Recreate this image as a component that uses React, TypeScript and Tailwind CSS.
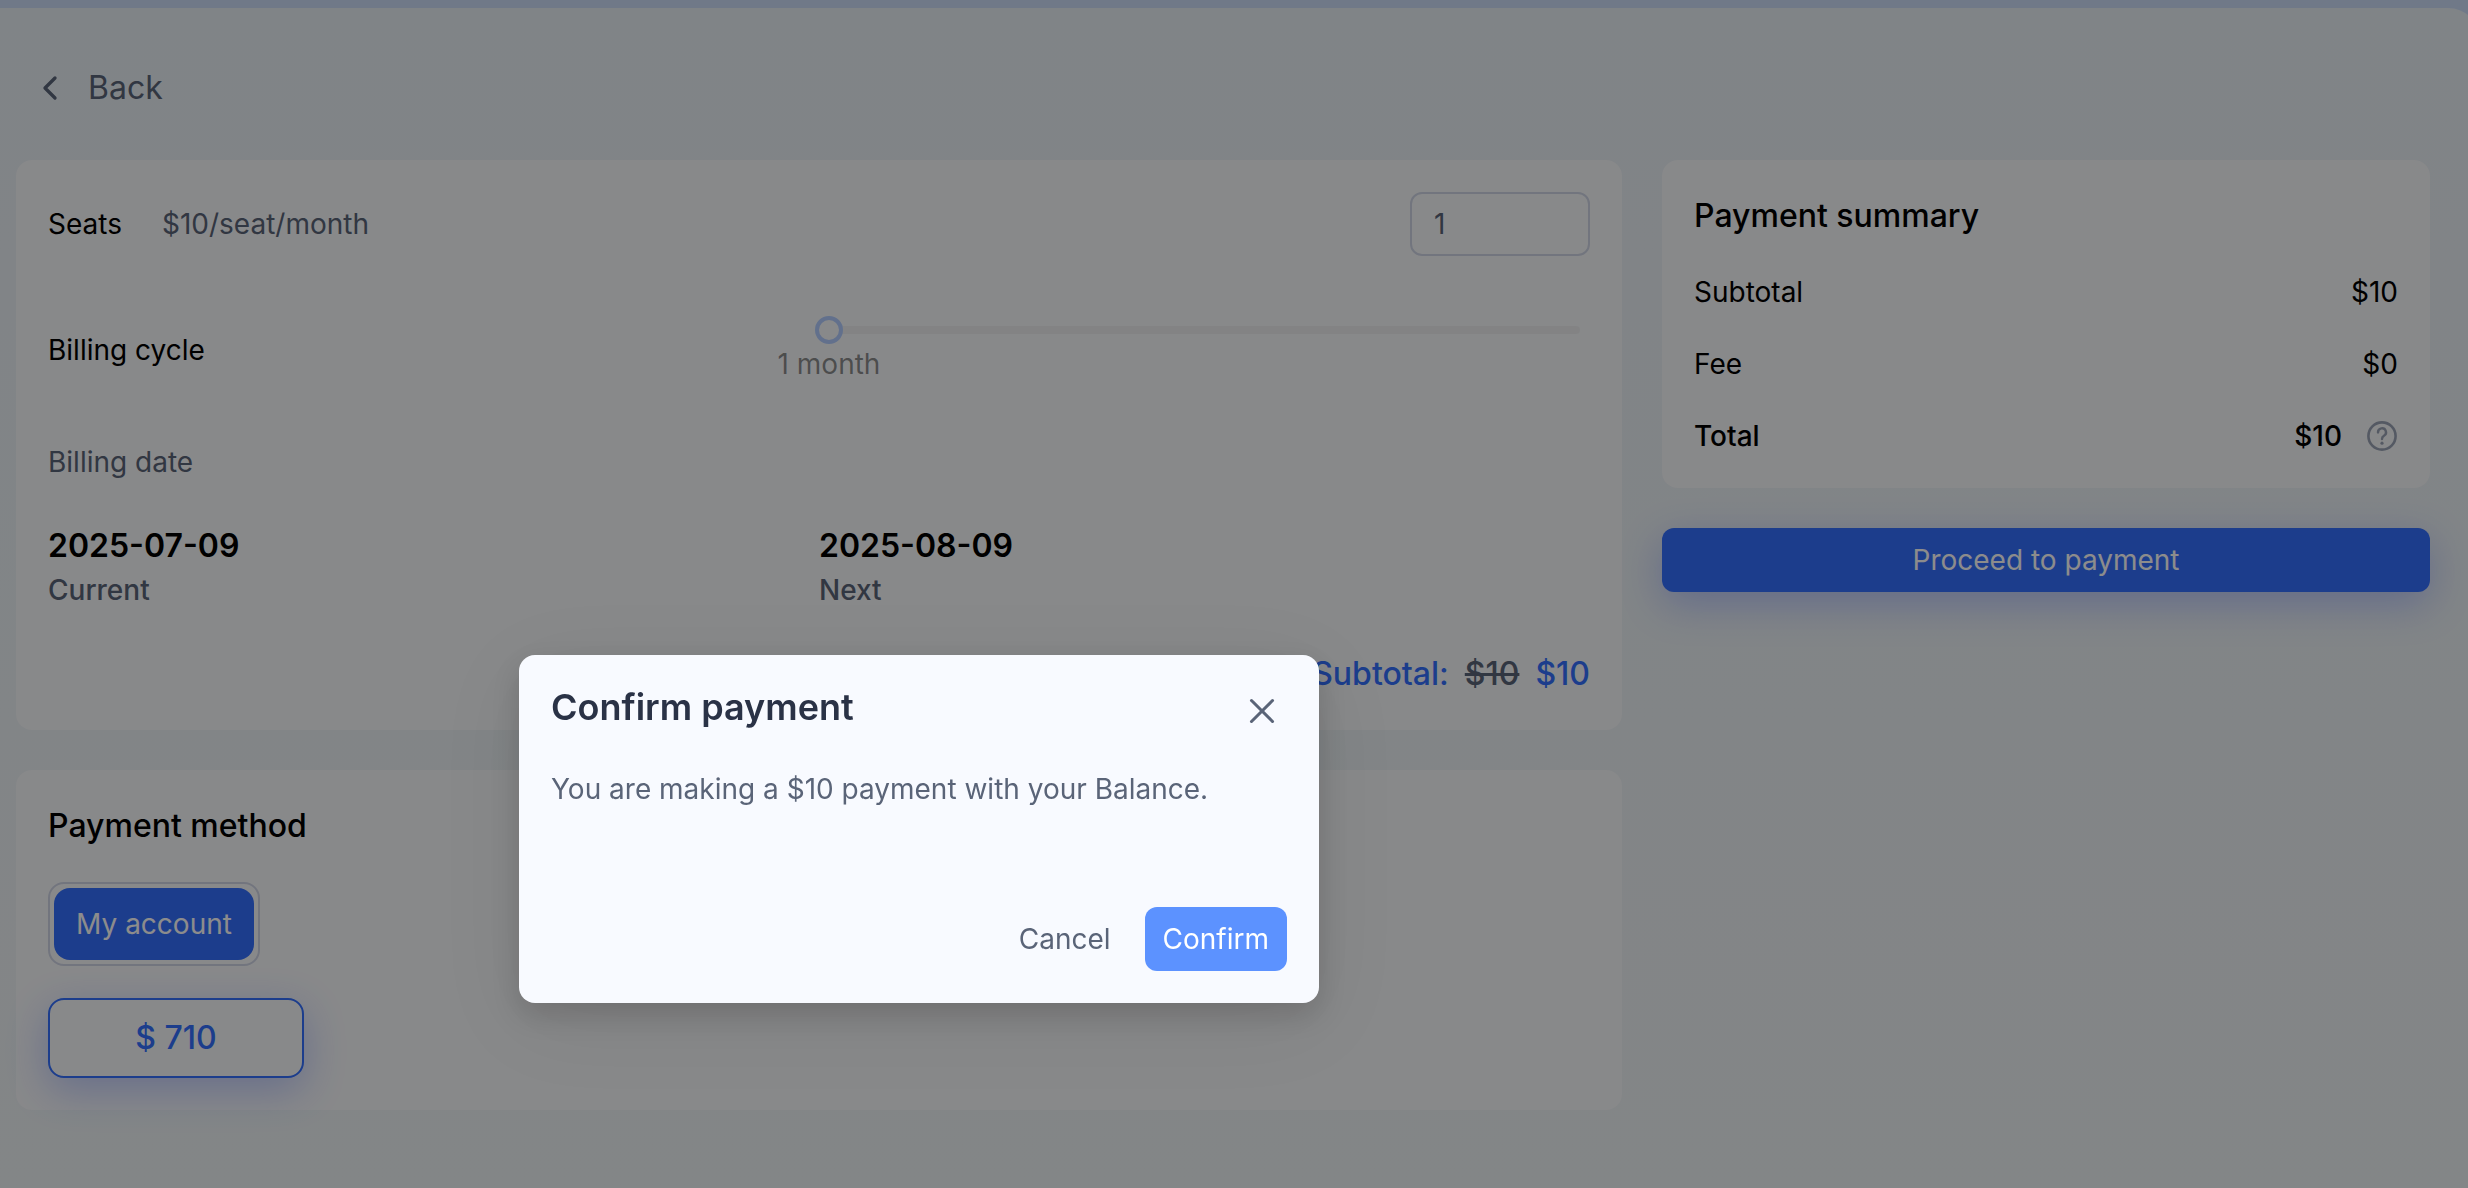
import { useState } from "react";
import { ChevronLeft, X } from "lucide-react";

const PRICE_PER_SEAT = 10;

function HelpIcon() {
  return (
    <svg width="32" height="32" viewBox="0 0 32 32" fill="none" aria-hidden="true">
      <circle cx="16" cy="16" r="13.6" stroke="currentColor" strokeWidth="2.6" />
      <path
        d="M12 12.4a4 4 0 1 1 6 3.4c-1.3.8-2 1.6-2 3.2"
        stroke="currentColor"
        strokeWidth="2.4"
        strokeLinecap="round"
      />
      <circle cx="16" cy="23.2" r="1.6" fill="currentColor" />
    </svg>
  );
}

interface BillingDateProps {
  date: string;
  label: string;
}

function BillingDate({ date, label }: BillingDateProps) {
  return (
    <div className="font-medium">
      <p className="text-[32px] font-semibold leading-[44px] text-black">{date}</p>
      <p className="text-[#5a6478]">{label}</p>
    </div>
  );
}

interface SummaryRowProps {
  label: string;
  value: string;
}

function SummaryRow({ label, value }: SummaryRowProps) {
  return (
    <div className="flex justify-between leading-[40px]">
      <span>{label}</span>
      <span>{value}</span>
    </div>
  );
}

function PlanCard() {
  const [seats, setSeats] = useState(1);
  const [months, setMonths] = useState(1);

  return (
    <section className="rounded-2xl bg-[#f8f9fb] p-8">
      <div className="flex items-center gap-10">
        <label htmlFor="seats">Seats</label>
        <span className="text-[#5a6478]">${PRICE_PER_SEAT}/seat/month</span>
        <input
          id="seats"
          type="text"
          inputMode="numeric"
          value={seats}
          onChange={(e) => setSeats(Number(e.target.value) || 1)}
          className="ml-auto h-16 w-[180px] rounded-xl border-2 border-[#cfd6e6] bg-transparent px-[22px] text-[#5a6478]"
        />
      </div>

      <div className="mt-[60px] grid grid-cols-2 items-center">
        <label htmlFor="cycle">Billing cycle</label>
        <div>
          <div className="relative h-7">
            <div className="absolute inset-x-[10px] top-[10px] h-2 rounded-full bg-black/4" />
            <input
              id="cycle"
              type="range"
              min={1}
              max={12}
              value={months}
              onChange={(e) => setMonths(Number(e.target.value))}
              className="absolute -inset-x-1 top-0 h-7 appearance-none bg-transparent [&::-webkit-slider-thumb]:size-7 [&::-webkit-slider-thumb]:appearance-none [&::-webkit-slider-thumb]:rounded-full [&::-webkit-slider-thumb]:border-4 [&::-webkit-slider-thumb]:border-[#b2cdff] [&::-webkit-slider-thumb]:bg-[#f8f9fb]"
            />
          </div>
          <p className="-ml-[70px] w-40 text-center leading-[40px] text-black/45">{months} month</p>
        </div>
      </div>

      <p className="mt-14 text-[#5a6478]">Billing date</p>
      <div className="mt-10 grid grid-cols-2">
        <BillingDate date="2025-07-09" label="Current" />
        <BillingDate date="2025-08-09" label="Next" />
      </div>

      <div className="mt-[38px] flex justify-end gap-4 text-[32px] font-medium leading-[48px] text-[#3370ff]">
        <span>Subtotal:</span>
        <del className="text-[#5a6478]">$10</del>
        <span>$10</span>
      </div>
    </section>
  );
}

function PaymentMethodCard() {
  return (
    <section className="rounded-2xl bg-[#f8f9fb] p-8">
      <h2 className="text-[32px] font-medium leading-[48px]">Payment method</h2>
      <div className="mt-8 w-fit rounded-2xl border-2 border-[#d0d5e6] p-1">
        <button type="button" className="block h-[72px] w-[200px] rounded-2xl bg-[#3370ff] text-white">
          My account
        </button>
      </div>
      <button
        type="button"
        className="mt-8 block h-20 w-64 rounded-2xl border-2 border-[#3370ff] bg-[#f8f9fb] text-[32px] font-medium text-[#3370ff] shadow-[0_12px_40px_rgba(51,88,255,0.3)]"
      >
        $ 710
      </button>
    </section>
  );
}

function PaymentSummary() {
  return (
    <aside className="w-[768px] shrink-0">
      <section className="flex flex-col gap-8 rounded-2xl bg-[#f8f9fb] p-8">
        <h2 className="text-[32px] font-medium leading-[48px]">Payment summary</h2>
        <SummaryRow label="Subtotal" value="$10" />
        <SummaryRow label="Fee" value="$0" />
        <div className="flex items-center font-medium leading-[40px]">
          <span>Total</span>
          <span className="ml-auto">$10</span>
          <button type="button" aria-label="About the total" className="ml-6 text-[#9aa3b5]">
            <HelpIcon />
          </button>
        </div>
      </section>
      <button
        type="button"
        className="mt-10 h-16 w-full rounded-xl bg-[#3370ff] text-white shadow-[0_12px_40px_rgba(51,88,255,0.3)]"
      >
        Proceed to payment
      </button>
    </aside>
  );
}

function ConfirmDialog() {
  return (
    <div className="fixed inset-0 flex items-start justify-center bg-black/45 pr-[630px] pt-[655px]">
      <div
        role="dialog"
        aria-modal="true"
        aria-labelledby="confirm-title"
        className="w-[800px] rounded-2xl bg-[#f8faff] p-8 text-[#5a6478] shadow-[0_12px_32px_rgba(0,0,0,0.16),0_18px_96px_16px_rgba(0,0,0,0.06)]"
      >
        <div className="flex h-10 items-center justify-between">
          <h2 id="confirm-title" className="text-4xl font-semibold text-[#2a3246]">
            Confirm payment
          </h2>
          <button type="button" aria-label="Close" className="mr-1 mt-2">
            <X size={42} strokeWidth={1.75} />
          </button>
        </div>
        <p className="mt-10">You are making a $10 payment with your Balance.</p>
        <div className="mt-24 flex justify-end gap-4">
          <button type="button" className="h-16 px-[18px]">
            Cancel
          </button>
          <button type="button" className="h-16 rounded-xl bg-[#5c92ff] px-[18px] text-white">
            Confirm
          </button>
        </div>
      </div>
    </div>
  );
}

export default function App() {
  return (
    <div className="h-screen overflow-hidden bg-[#ccddf8] pt-2 font-['Inter',sans-serif] text-[28px] leading-[44px] text-black">
      <main className="-mr-3 min-h-full rounded-tr-[32px] bg-linear-to-b from-[#eaf0f6] to-[#eff4f6] pl-4 pr-[50px] pt-2">
        <button type="button" className="ml-3.5 flex h-36 items-center gap-[18px] text-[32px] text-[#5a6478]">
          <ChevronLeft size={40} />
          Back
        </button>
        <div className="flex items-start gap-10">
          <div className="flex min-w-0 flex-1 flex-col gap-10">
            <PlanCard />
            <PaymentMethodCard />
          </div>
          <PaymentSummary />
        </div>
      </main>
      <ConfirmDialog />
    </div>
  );
}
